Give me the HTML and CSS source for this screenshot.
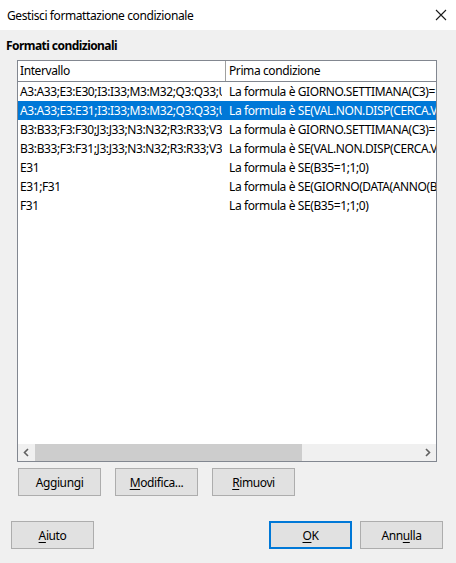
FILE: index.html
```html
<!DOCTYPE html>
<html lang="it">
<head>
<meta charset="utf-8">
<title>Gestisci formattazione condizionale</title>
<link rel="stylesheet" href="styles.css">
</head>
<body>
<div class="dialog">
  <div class="titlebar">
    <span class="title">Gestisci formattazione condizionale</span>
    <svg class="close" width="12" height="12" viewBox="0 0 12 12"><path d="M1 1 L11 11 M11 1 L1 11" stroke="#1a1a1a" stroke-width="1.1" fill="none"/></svg>
  </div>
  <div class="content">
    <div class="section-title">Formati condizionali</div>
    <div class="list">
      <div class="header">
        <div class="cell c1">Intervallo</div>
        <div class="cell c2">Prima condizione</div>
      </div>
      <div class="rows">
        <div class="row"><div class="cell c1">A3:A33;E3:E30;I3:I33;M3:M32;Q3:Q33;U3:U33</div><div class="cell c2">La formula è GIORNO.SETTIMANA(C3)=1</div></div>
        <div class="row selected"><div class="cell c1">A3:A33;E3:E31;I3:I33;M3:M32;Q3:Q33;U3:U33</div><div class="cell c2">La formula è SE(VAL.NON.DISP(CERCA.VERT</div></div>
        <div class="row"><div class="cell c1">B3:B33;F3:F30;J3:J33;N3:N32;R3:R33;V3</div><div class="cell c2">La formula è GIORNO.SETTIMANA(C3)=1</div></div>
        <div class="row"><div class="cell c1">B3:B33;F3:F31;J3:J33;N3:N32;R3:R33;V3</div><div class="cell c2">La formula è SE(VAL.NON.DISP(CERCA.VERT</div></div>
        <div class="row"><div class="cell c1">E31</div><div class="cell c2">La formula è SE(B35=1;1;0)</div></div>
        <div class="row"><div class="cell c1">E31;F31</div><div class="cell c2">La formula è SE(GIORNO(DATA(ANNO(B35</div></div>
        <div class="row"><div class="cell c1">F31</div><div class="cell c2">La formula è SE(B35=1;1;0)</div></div>
      </div>
      <div class="hscroll">
        <svg class="arrow" width="17" height="17" viewBox="0 0 17 17"><path d="M10 5 L6.5 8.5 L10 12" stroke="#606060" stroke-width="1.6" fill="none"/></svg>
        <div class="track"><div class="thumb"></div></div>
        <svg class="arrow" width="17" height="17" viewBox="0 0 17 17"><path d="M7 5 L10.5 8.5 L7 12" stroke="#606060" stroke-width="1.6" fill="none"/></svg>
      </div>
    </div>
    <div class="actions">
      <button class="btn">A<u>g</u>giungi</button>
      <button class="btn"><u>M</u>odifica...</button>
      <button class="btn"><u>R</u>imuovi</button>
    </div>
    <div class="footer">
      <button class="btn"><u>A</u>iuto</button>
      <div class="spacer"></div>
      <button class="btn default"><u>O</u>K</button>
      <button class="btn">Ann<u>u</u>lla</button>
    </div>
  </div>
</div>
</body>
</html>
```
FILE: styles.css
```css
html, body {
  margin: 0;
  padding: 0;
}
body {
  width: 456px;
  height: 563px;
  background: #f0f0f0;
  font-family: "Noto Sans", "Open Sans", sans-serif;
  font-size: 12px;
  letter-spacing: -0.4px;
  color: #000;
  overflow: hidden;
}
.dialog {
  display: flex;
  flex-direction: column;
  height: 563px;
}
.titlebar {
  height: 30px;
  background: #fff;
  display: flex;
  align-items: center;
  justify-content: space-between;
  padding: 0 9px 0 7px;
}
.title {
  font-size: 12px;
  color: #000;
}
.close {
  display: block;
}
.content {
  display: flex;
  flex-direction: column;
}
.section-title {
  font-weight: bold;
  letter-spacing: -0.55px;
  margin: 8px 0 0 6px;
  height: 22px;
  line-height: 16px;
}
.list {
  margin-left: 17px;
  width: 418px;
  height: 400px;
  border: 1px solid #828790;
  background: #fff;
  display: flex;
  flex-direction: column;
}
.header {
  display: flex;
  height: 20px;
  border-bottom: 1px solid #828790;
  flex: none;
}
.header .cell {
  line-height: 20px;
}
.cell {
  white-space: nowrap;
  overflow: hidden;
  padding-left: 2px;
  box-sizing: border-box;
}
.c1 {
  width: 204px;
  margin-right: 4px;
  flex: none;
}
.header .c1 {
  width: 208px;
  margin-right: 0;
  border-right: 1px solid #a0a0a0;
}
.c2 {
  flex: 1;
  min-width: 0;
}
.header .c2 {
  padding-left: 3px;
}
.row .c2 {
  padding-left: 3px;
}
.rows {
  flex: 1;
  display: flex;
  flex-direction: column;
}
.row {
  display: flex;
  height: 19px;
  line-height: 19px;
}
.row.selected {
  background: #0078d7;
  color: #fff;
}
.hscroll {
  height: 17px;
  display: flex;
  background: #f0f0f0;
  flex: none;
}
.arrow {
  display: block;
  flex: none;
}
.track {
  flex: 1;
  display: flex;
}
.thumb {
  width: 267px;
  background: #cdcdcd;
}
.actions {
  display: flex;
  gap: 14px;
  margin: 6px 0 0 18px;
}
.btn {
  width: 83px;
  height: 28px;
  background: #e1e1e1;
  border: 1px solid #adadad;
  font-family: "Noto Sans", "Open Sans", sans-serif;
  font-size: 12px;
  letter-spacing: -0.4px;
  color: #000;
  padding: 0;
  box-sizing: border-box;
}
.btn u {
  text-decoration-thickness: 1px;
  text-underline-offset: 2px;
}
.btn.default {
  border: 2px solid #0078d7;
}
.footer {
  display: flex;
  gap: 8px;
  margin: 25px 13px 0 11px;
}
.spacer {
  flex: 1;
}
```
